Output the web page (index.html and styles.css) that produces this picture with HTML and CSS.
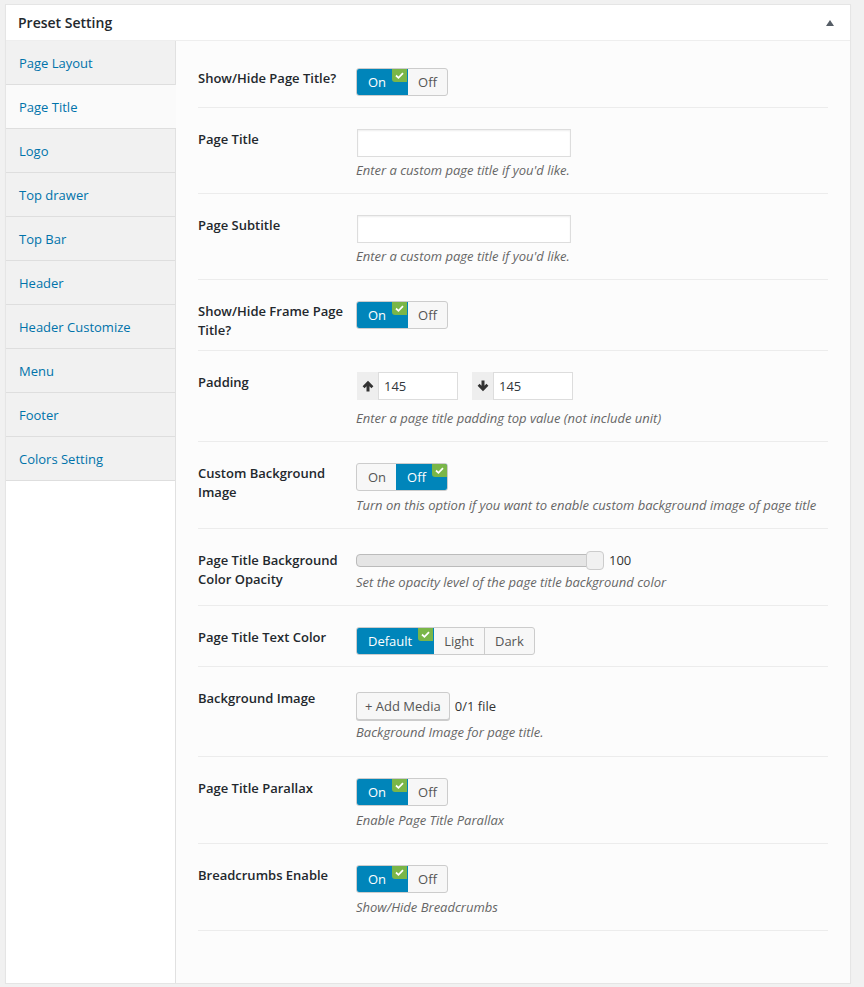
FILE: index.html
```html
<!DOCTYPE html>
<html>
<head>
<meta charset="utf-8">
<link rel="stylesheet" href="styles.css">
</head>
<body>
<div class="box">
  <div class="box-head">
    <span class="box-title">Preset Setting</span>
    <span class="caret"></span>
  </div>
  <div class="box-body">
    <ul class="tabs">
      <li class="tab">Page Layout</li>
      <li class="tab active">Page Title</li>
      <li class="tab">Logo</li>
      <li class="tab">Top drawer</li>
      <li class="tab">Top Bar</li>
      <li class="tab">Header</li>
      <li class="tab">Header Customize</li>
      <li class="tab">Menu</li>
      <li class="tab">Footer</li>
      <li class="tab">Colors Setting</li>
    </ul>
    <div class="content">
      <div class="row">
        <div class="label">Show/Hide Page Title?</div>
        <div class="field">
          <div class="seg">
            <span class="opt on">On<i class="badge"><svg viewBox="0 0 10 8" width="9" height="7"><path d="M1 4 L3.8 6.6 L9 1.2" fill="none" stroke="#fff" stroke-width="2"/></svg></i></span><span class="opt">Off</span>
          </div>
        </div>
      </div>

      <div class="row">
        <div class="label">Page Title</div>
        <div class="field">
          <input class="text" type="text">
          <div class="desc">Enter a custom page title if you'd like.</div>
        </div>
      </div>

      <div class="row">
        <div class="label">Page Subtitle</div>
        <div class="field">
          <input class="text" type="text">
          <div class="desc">Enter a custom page title if you'd like.</div>
        </div>
      </div>

      <div class="row">
        <div class="label">Show/Hide Frame Page Title?</div>
        <div class="field">
          <div class="seg">
            <span class="opt on">On<i class="badge"><svg viewBox="0 0 10 8" width="9" height="7"><path d="M1 4 L3.8 6.6 L9 1.2" fill="none" stroke="#fff" stroke-width="2"/></svg></i></span><span class="opt">Off</span>
          </div>
        </div>
      </div>

      <div class="row">
        <div class="label">Padding</div>
        <div class="field">
          <div class="pad-group">
            <div class="pad">
              <span class="addon"><svg viewBox="0 0 12 12" width="12" height="12"><path d="M6 0.8 L11.4 6.2 L9.4 8.2 L7.5 6.3 V11.4 H4.5 V6.3 L2.6 8.2 L0.6 6.2 Z" fill="#333"/></svg></span><input class="num" type="text" value="145">
            </div>
            <div class="pad">
              <span class="addon"><svg viewBox="0 0 12 12" width="12" height="12"><path d="M6 11.2 L11.4 5.8 L9.4 3.8 L7.5 5.7 V0.6 H4.5 V5.7 L2.6 3.8 L0.6 5.8 Z" fill="#333"/></svg></span><input class="num" type="text" value="145">
            </div>
          </div>
          <div class="desc">Enter a page title padding top value (not include unit)</div>
        </div>
      </div>

      <div class="row">
        <div class="label">Custom Background Image</div>
        <div class="field">
          <div class="seg">
            <span class="opt">On</span><span class="opt on">Off<i class="badge"><svg viewBox="0 0 10 8" width="9" height="7"><path d="M1 4 L3.8 6.6 L9 1.2" fill="none" stroke="#fff" stroke-width="2"/></svg></i></span>
          </div>
          <div class="desc">Turn on this option if you want to enable custom background image of page title</div>
        </div>
      </div>

      <div class="row">
        <div class="label">Page Title Background Color Opacity</div>
        <div class="field">
          <div class="slider-line">
            <div class="track"><span class="thumb"></span></div>
            <span class="slider-val">100</span>
          </div>
          <div class="desc desc-slider">Set the opacity level of the page title background color</div>
        </div>
      </div>

      <div class="row">
        <div class="label">Page Title Text Color</div>
        <div class="field">
          <div class="seg">
            <span class="opt on">Default<i class="badge"><svg viewBox="0 0 10 8" width="9" height="7"><path d="M1 4 L3.8 6.6 L9 1.2" fill="none" stroke="#fff" stroke-width="2"/></svg></i></span><span class="opt">Light</span><span class="opt">Dark</span>
          </div>
        </div>
      </div>

      <div class="row">
        <div class="label">Background Image</div>
        <div class="field">
          <div class="media-line">
            <span class="btn">+ Add Media</span>
            <span class="count">0/1 file</span>
          </div>
          <div class="desc desc-media">Background Image for page title.</div>
        </div>
      </div>

      <div class="row">
        <div class="label">Page Title Parallax</div>
        <div class="field">
          <div class="seg">
            <span class="opt on">On<i class="badge"><svg viewBox="0 0 10 8" width="9" height="7"><path d="M1 4 L3.8 6.6 L9 1.2" fill="none" stroke="#fff" stroke-width="2"/></svg></i></span><span class="opt">Off</span>
          </div>
          <div class="desc">Enable Page Title Parallax</div>
        </div>
      </div>

      <div class="row">
        <div class="label">Breadcrumbs Enable</div>
        <div class="field">
          <div class="seg">
            <span class="opt on">On<i class="badge"><svg viewBox="0 0 10 8" width="9" height="7"><path d="M1 4 L3.8 6.6 L9 1.2" fill="none" stroke="#fff" stroke-width="2"/></svg></i></span><span class="opt">Off</span>
          </div>
          <div class="desc">Show/Hide Breadcrumbs</div>
        </div>
      </div>
    </div>
  </div>
</div>
</body>
</html>
```

FILE: styles.css
```css
* { box-sizing: border-box; }
html, body { margin: 0; padding: 0; }
body {
  background: #f1f1f1;
  font-family: "Open Sans", "Noto Sans", sans-serif;
  font-size: 13px;
  color: #23282d;
}
.box {
  margin: 4px 13px 0 5px;
  height: 980px;
  background: #fff;
  border: 1px solid #e5e5e5;
  box-shadow: 0 1px 1px rgba(0,0,0,0.04);
  display: flex;
  flex-direction: column;
}
.box-head {
  height: 36px;
  border-bottom: 1px solid #eee;
  display: flex;
  align-items: center;
  justify-content: space-between;
  padding: 0 16px 0 12px;
}
.box-title {
  font-size: 14px;
  font-weight: 600;
  color: #23282d;
}
.caret {
  width: 0; height: 0;
  border-left: 4px solid transparent;
  border-right: 4px solid transparent;
  border-bottom: 6px solid #555d66;
}
.box-body {
  flex: 1;
  display: flex;
}
.tabs {
  list-style: none;
  margin: 0;
  padding: 0;
  width: 170px;
  flex: none;
  background: #fff;
  border-right: 1px solid #e1e1e1;
}
.tab {
  height: 44px;
  line-height: 43px;
  padding: 1px 0 0 13px;
  color: #0073aa;
  background: #f1f1f1;
  border-bottom: 1px solid #dedede;
  font-size: 13px;
}
.tab.active {
  background: #fafafa;
  margin-right: -1px;
}
.content {
  flex: 1;
  background: #fcfcfc;
  padding: 6px 22px 0 22px;
}
.row {
  display: flex;
  padding: 21px 0 11px 0;
  border-bottom: 1px solid #ececec;
}
.label {
  width: 158px;
  flex: none;
  padding-right: 12px;
  font-weight: 600;
  line-height: 19px;
  padding-top: 1px;
  margin-bottom: -1px;
  color: #23282d;
}
.field { flex: 1; }
.desc {
  margin: 4px 0 3px 0;
  line-height: 18px;
  font-style: italic;
  color: #666;
}
.seg + .desc { margin-top: 5px; }
.desc-slider { margin-top: 3px; }
.desc-media { margin-top: 3px; margin-bottom: 4px; }
.text {
  display: block;
  width: 214px;
  height: 28px;
  margin: 0 0 0 1px;
  border: 1px solid #ddd;
  background: #fff;
  box-shadow: inset 0 1px 2px rgba(0,0,0,0.07);
  font: inherit;
}
.seg {
  display: inline-flex;
  vertical-align: top;
  height: 28px;
  border: 1px solid #ccc;
  border-radius: 3px;
  background: #f7f7f7;
  overflow: hidden;
}
.opt {
  position: relative;
  display: flex;
  align-items: center;
  padding: 0 10px;
  color: #555;
  border-left: 1px solid #ccc;
}
.opt:first-child { border-left: none; padding-left: 11px; }
.opt.on {
  background: #0085ba;
  color: #fff;
  padding-right: 21px;
  border-left-color: #0085ba;
}
.opt.on + .opt { border-left-color: #0085ba; }
.badge {
  position: absolute;
  top: 0;
  right: 0;
  width: 15px;
  height: 13px;
  background: #7ab648;
  border-bottom-left-radius: 3px;
  display: flex;
  align-items: center;
  justify-content: center;
}
.pad-group {
  display: flex;
  gap: 14px;
  margin-left: 1px;
  margin-bottom: 9px;
}
.pad { display: flex; height: 28px; }
.addon {
  width: 21px;
  background: #eee;
  display: flex;
  align-items: center;
  justify-content: center;
}
.num {
  width: 80px;
  height: 28px;
  border: 1px solid #ddd;
  background: #fff;
  padding: 0 5px;
  font: inherit;
  color: #32373c;
}
.slider-line {
  display: flex;
  align-items: center;
  height: 20px;
}
.track {
  position: relative;
  width: 248px;
  height: 13px;
  background: #e5e5e5;
  border: 1px solid #bbb;
  border-radius: 4px;
}
.thumb {
  position: absolute;
  right: -1px;
  top: -4px;
  width: 18px;
  height: 19px;
  background: #f1f1f1;
  border: 1px solid #ccc;
  border-radius: 4px;
}
.slider-val { margin-left: 5px; color: #333; }
.media-line {
  display: flex;
  align-items: center;
  gap: 5px;
  margin-top: 4px;
}
.btn {
  height: 28px;
  padding: 0 8px;
  display: flex;
  align-items: center;
  border: 1px solid #ccc;
  border-radius: 3px;
  background: #f7f7f7;
  box-shadow: 0 1px 0 #ccc;
  color: #555;
}
.count { color: #333; }
```
